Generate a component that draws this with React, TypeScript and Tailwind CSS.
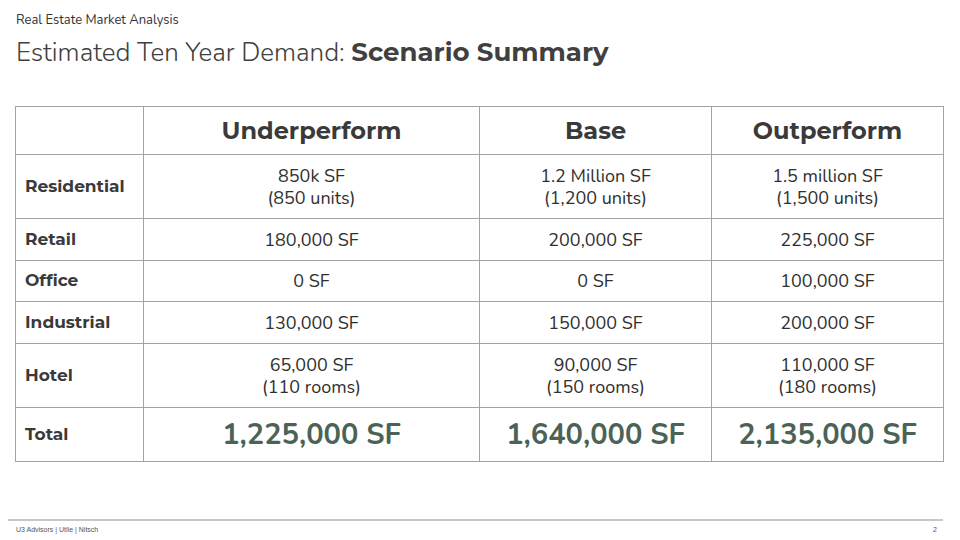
const rows = [
  { label: "Residential", values: [["850k SF", "(850 units)"], ["1.2 Million SF", "(1,200 units)"], ["1.5 million SF", "(1,500 units)"]], h: "h-[64px]" },
  { label: "Retail", values: [["180,000 SF"], ["200,000 SF"], ["225,000 SF"]], h: "h-[42px]" },
  { label: "Office", values: [["0 SF"], ["0 SF"], ["100,000 SF"]], h: "h-[41px]" },
  { label: "Industrial", values: [["130,000 SF"], ["150,000 SF"], ["200,000 SF"]], h: "h-[42px]" },
  { label: "Hotel", values: [["65,000 SF", "(110 rooms)"], ["90,000 SF", "(150 rooms)"], ["110,000 SF", "(180 rooms)"]], h: "h-[64px]" },
];

const totals = ["1,225,000 SF", "1,640,000 SF", "2,135,000 SF"];

const heading = "font-['Montserrat','Open_Sans',sans-serif] font-bold";
const body = "font-['Nunito','Lato',sans-serif]";

export default function App() {
  return (
    <div className="relative flex h-[540px] w-[960px] flex-col bg-white text-[#333333]">
      <header className="px-4 pt-[11px]">
        <p className={`${body} text-[13px] leading-[18px] text-[#333]`}>Real Estate Market Analysis</p>
        <h1 className={`${body} mt-[7px] text-[26px] font-light leading-[32px] text-[#404040]`}>
          Estimated Ten Year Demand: <span className={heading}>Scenario Summary</span>
        </h1>
      </header>

      <div className="mt-[37px] px-[15px]">
        <table className="w-[929px] table-fixed border-collapse">
          <colgroup>
            <col className="w-[128px]" />
            <col className="w-[336px]" />
            <col className="w-[232px]" />
            <col className="w-[232px]" />
          </colgroup>
          <thead>
            <tr className="h-[48px]">
              <th className="border border-[#a3a3a3]" />
              {["Underperform", "Base", "Outperform"].map((t) => (
                <th key={t} className={`${heading} border border-[#a3a3a3] text-center text-[24px] text-[#3a3a3a]`}>
                  {t}
                </th>
              ))}
            </tr>
          </thead>
          <tbody>
            {rows.map((r) => (
              <tr key={r.label} className={r.h}>
                <td className={`${heading} border border-[#a3a3a3] pl-[9px] text-left text-[17px] text-[#3a3a3a]`}>
                  {r.label}
                </td>
                {r.values.map((v, i) => (
                  <td key={i} className={`${body} border border-[#a3a3a3] text-center text-[18px] leading-[22px] text-[#2f2f2f]`}>
                    {v.map((line) => (
                      <div key={line}>{line}</div>
                    ))}
                  </td>
                ))}
              </tr>
            ))}
            <tr className="h-[54px]">
              <td className={`${heading} border border-[#a3a3a3] pl-[9px] text-left text-[17px] text-[#3a3a3a]`}>Total</td>
              {totals.map((t) => (
                <td key={t} className={`${body} border border-[#a3a3a3] text-center text-[29px] font-bold text-[#4a6356]`}>
                  {t}
                </td>
              ))}
            </tr>
          </tbody>
        </table>
      </div>

      <footer className="mt-auto px-2 pb-[6px]">
        <div className="h-[2px] w-[935px] bg-[#c8c8c8]" />
        <div className="mt-[4px] flex items-center justify-between pl-2 pr-[15px] font-['Liberation_Sans_Narrow','Liberation_Sans',sans-serif] text-[7px] leading-[9px] text-[#555]">
          <span>U3 Advisors | Utile | Nitsch</span>
          <span>2</span>
        </div>
      </footer>
    </div>
  );
}
